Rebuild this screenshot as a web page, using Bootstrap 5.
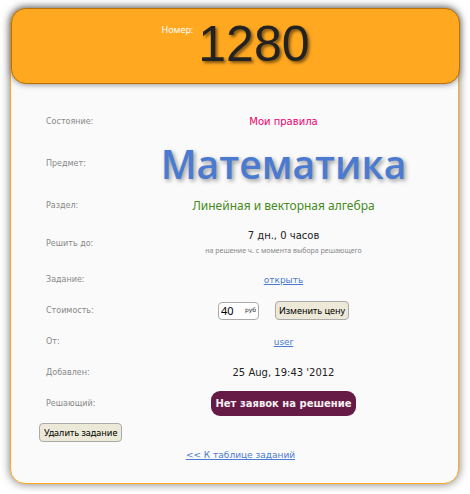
<!DOCTYPE html>
<html lang="ru">
<head>
<meta charset="utf-8">
<meta name="viewport" content="width=device-width, initial-scale=1">
<title>Задание 1280</title>
<link href="https://cdn.jsdelivr.net/npm/bootstrap@5.3.0/dist/css/bootstrap.min.css" rel="stylesheet">
<style>
body{background:#fff;color:#222;font:10px/14px "DejaVu Sans",sans-serif}
.task-page{padding:8px 11px 8px 10px}
.task-panel{background:#fafafa;border:1px solid #ffa820;border-radius:15px;box-shadow:0 0 10px #777;padding-bottom:21px}
.task-head{background:#ffa820;border:1px solid #b87008;border-radius:15px;box-shadow:0 0 6px #777;margin:-1px -2px 0 0;min-height:76px;padding:7px 0 0}
.task-head-label{font:9px/14px "Noto Sans",sans-serif;color:#fff;margin:7px 5px 0 0}
.task-number{font:50px/56px "Liberation Sans",sans-serif;color:#222;text-shadow:2px 2px 3px rgba(0,0,0,.5)}
.task-body{padding:20px 18px 0 28px}
.task-row{display:grid;grid-template-columns:88px 1fr;align-items:center;min-height:31px}
.task-row dt{font-size:8px;font-weight:400;color:#888;padding-left:7px}
.task-row dd{margin:0;text-align:center}
.row-mid{min-height:35px}
.row-tall{min-height:41px}
.row-subject{min-height:49px}
.task-row .task-subject{font:600 39px/46px "Open Sans",sans-serif;color:#4a7bd0;text-shadow:2px 2px 4px rgba(0,0,0,.4)}
.task-status{color:#f00070}
.task-row .task-topic{font:12px/14px "Noto Sans",sans-serif;color:#468a1c}
.task-note{font:7px/16px "Noto Sans",sans-serif;color:#888}
a{color:#4a7bd0;font-size:9px}
.price-box{width:41px;height:18px;background:#fff;border:1px solid #aaa;border-radius:4px;padding:0 3px 0 2px}
.price-box input{width:24px;border:0;padding:0;background:none;color:#000;font:11px/14px "Noto Sans",sans-serif}
.price-box label{font-size:6px;line-height:14px}
.task-btn{background:#ece9d8;border:1px solid #aaa;border-radius:4px;color:#000;font:9px/17px "Noto Sans",sans-serif;padding:0 3px}
.no-offers{background:#651b45;color:#f4eef1;border-radius:9px;font-weight:700;line-height:25px;padding:0 4px}
.task-foot{padding:6px 0 0 12px}
</style>
<script src="https://cdn.jsdelivr.net/npm/bootstrap@5.3.0/dist/js/bootstrap.bundle.min.js"></script>
</head>
<body>
<main class="task-page">
<section class="task-panel">
<header class="task-head d-flex justify-content-center align-items-start">
<span class="task-head-label">Номер:</span><h1 class="task-number mb-0">1280</h1>
</header>
<div class="task-body">
<dl class="mb-0">
<div class="task-row row-mid"><dt>Состояние:</dt><dd class="task-status">Мои правила</dd></div>
<div class="task-row row-subject"><dt>Предмет:</dt><dd class="task-subject">Математика</dd></div>
<div class="task-row row-mid"><dt>Раздел:</dt><dd class="task-topic">Линейная и векторная алгебра</dd></div>
<div class="task-row row-tall"><dt>Решить до:</dt><dd>7 дн., 0 часов<div class="task-note">на решение ч. с момента выбора решающего</div></dd></div>
<div class="task-row"><dt>Задание:</dt><dd><a href="#">открыть</a></dd></div>
<div class="task-row"><dt>Стоимость:</dt><dd class="d-flex justify-content-center align-items-center">
<div class="price-box d-flex me-3"><input id="price" type="text" value="40"><label for="price">руб</label></div>
<button type="button" class="task-btn">Изменить цену</button></dd></div>
<div class="task-row"><dt>От:</dt><dd><a href="#">user</a></dd></div>
<div class="task-row"><dt>Добавлен:</dt><dd>25 Aug, 19:43 '2012</dd></div>
<div class="task-row"><dt>Решающий:</dt><dd><span class="no-offers d-inline-block">Нет заявок на решение</span></dd></div>
</dl>
<button type="button" class="task-btn d-block mt-1 px-1">Удалить задание</button>
</div>
<div class="task-foot text-center"><a href="#">&lt;&lt; К таблице заданий</a></div>
</section>
</main>
</body>
</html>
